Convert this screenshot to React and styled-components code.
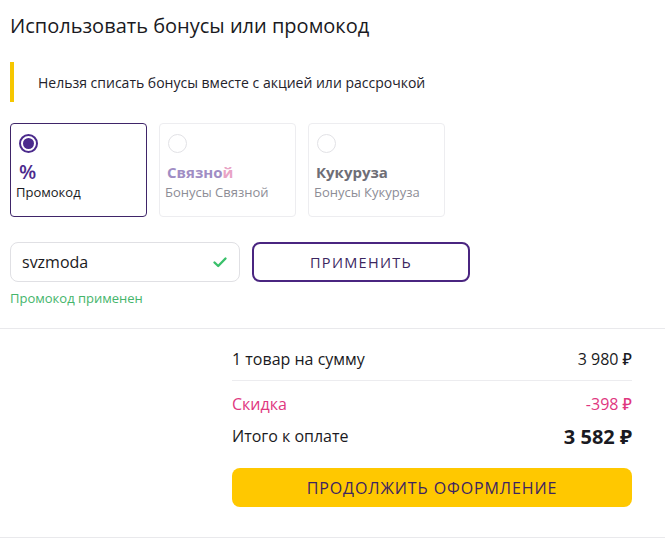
import React from 'react';
import styled, { createGlobalStyle } from 'styled-components';

const GlobalStyle = createGlobalStyle`
    * {
        box-sizing: border-box;
    }
    body {
        margin: 0;
        background: #fff;
        font-family: "Open Sans", "Noto Sans", sans-serif;
        color: #1e1d29;
    }
`

const Page = styled.div`
    width: 665px;
    height: 539px;
    overflow: hidden;
`

const Top = styled.section`
    padding: 12px 10px 0;
`

const Title = styled.h2`
    margin: 0;
    font-size: 20px;
    line-height: 28px;
    font-weight: 400;
    color: #1a1a22;
`

const Notice = styled.div`
    display: flex;
    align-items: center;
    height: 40px;
    margin-top: 22px;
    border-left: 4px solid #f6c700;
    padding-left: 24px;
    font-size: 14px;
    color: #23222b;
`

const Cards = styled.div`
    display: flex;
    gap: 12px;
    margin-top: 21px;
`

const Card = styled.div`
    width: 137px;
    height: 94px;
    padding: 10px 5px 0;
    border: 1px solid ${({ active }) => (active ? '#3f2569' : '#ededf0')};
    border-radius: 4px;
    display: flex;
    flex-direction: column;
`

const Radio = styled.span`
    width: 19px;
    height: 19px;
    margin-left: 3px;
    border-radius: 50%;
    border: ${({ checked }) => (checked ? '2px solid #4b2a8c' : '1px solid #e2e2e6')};
    display: flex;
    align-items: center;
    justify-content: center;

    &::after {
        content: '';
        width: 11px;
        height: 11px;
        border-radius: 50%;
        background: #4b2a8c;
        display: ${({ checked }) => (checked ? 'block' : 'none')};
    }
`

const CardTitle = styled.div`
    margin-top: 9px;
    height: 20px;
    line-height: 20px;
    font-size: 15px;
    font-weight: 700;
    color: ${({ color }) => color};
    padding-left: ${({ indent }) => indent || 0}px;
`

const Percent = styled.div`
    margin: 10px 0 0 3px;
    height: 18px;
    line-height: 18px;
    font-size: 20px;
    font-weight: 600;
    color: #4b2a8c;
`

const Pink = styled.span`
    color: #e9a4c6;
`

const CardSub = styled.div`
    margin-top: ${({ gap }) => gap || 2}px;
    font-size: 13px;
    line-height: 17px;
    color: ${({ dark }) => (dark ? '#1a1a22' : '#8d8d96')};
`

const PromoRow = styled.div`
    display: flex;
    gap: 12px;
    margin-top: 25px;
`

const InputBox = styled.div`
    width: 230px;
    height: 40px;
    border: 1px solid #e0e0e4;
    border-radius: 8px;
    display: flex;
    align-items: center;
    padding: 0 11px;
`

const CodeInput = styled.input`
    flex: 1;
    border: none;
    outline: none;
    font-family: inherit;
    font-size: 16px;
    color: #1a1a22;
    padding: 0;
    background: transparent;
    min-width: 0;
`

const ApplyBtn = styled.button`
    width: 218px;
    height: 40px;
    border: 2px solid #4a2580;
    border-radius: 8px;
    background: #fff;
    font-family: inherit;
    font-size: 14.5px;
    letter-spacing: 1.3px;
    color: #3b2660;
    font-weight: 500;
`

const Success = styled.div`
    margin-top: 8px;
    font-size: 13px;
    line-height: 17px;
    color: #45b56b;
`

const Divider = styled.div`
    height: 1px;
    background: #e9e9ec;
    margin-top: ${({ top }) => top}px;
`

const Summary = styled.section`
    width: 400px;
    margin-left: 232px;
    padding-top: 19px;
`

const Row = styled.div`
    display: flex;
    justify-content: space-between;
    align-items: center;
    height: ${({ h }) => h || 22}px;
    margin-top: ${({ top }) => top || 0}px;
    font-size: 16px;
    color: ${({ color }) => color || '#1a1a22'};
`

const Amount = styled.span`
    font-size: ${({ big }) => (big ? 20 : 16)}px;
    font-weight: ${({ big }) => (big ? 700 : 500)};
`

const Line = styled.div`
    height: 1px;
    background: #ececef;
    margin: ${({ m }) => m};
`

const CheckoutBtn = styled.button`
    display: block;
    width: 400px;
    height: 39px;
    margin-top: 19px;
    border: none;
    border-radius: 8px;
    background: #ffc800;
    font-family: inherit;
    font-size: 16px;
    letter-spacing: 0.9px;
    color: #3d2461;
    font-weight: 500;
`

const Check = () => (
    <svg width="16" height="16" viewBox="0 0 16 16">
        <path d="M2.5 8.5 L6.2 12 L13.5 4.5" fill="none" stroke="#39c06a" strokeWidth="2.4" strokeLinecap="round" strokeLinejoin="round" />
    </svg>
)

const App = () => {
    return <React.Fragment>
        <GlobalStyle />
        <Page>
            <Top>
                <Title>Использовать бонусы или промокод</Title>
                <Notice>Нельзя списать бонусы вместе с акцией или рассрочкой</Notice>

                <Cards>
                    <Card active>
                        <Radio checked />
                        <Percent>%</Percent>
                        <CardSub dark gap={3}>Промокод</CardSub>
                    </Card>
                    <Card>
                        <Radio />
                        <CardTitle color="#a08dc4" indent={2}>Связно<Pink>й</Pink></CardTitle>
                        <CardSub>Бонусы Связной</CardSub>
                    </Card>
                    <Card>
                        <Radio />
                        <CardTitle color="#6e6e76" indent={2}>Кукуруза</CardTitle>
                        <CardSub>Бонусы Кукуруза</CardSub>
                    </Card>
                </Cards>

                <PromoRow>
                    <InputBox>
                        <CodeInput defaultValue="svzmoda" />
                        <Check />
                    </InputBox>
                    <ApplyBtn>ПРИМЕНИТЬ</ApplyBtn>
                </PromoRow>
                <Success>Промокод применен</Success>
            </Top>

            <Divider top={21} />

            <Summary>
                <Row>
                    1 товар на сумму
                    <Amount>3 980 ₽</Amount>
                </Row>
                <Line m="10px 0 12px" />
                <Row color="#e0377f">
                    Скидка
                    <Amount>-398 ₽</Amount>
                </Row>
                <Row h={26} top={8}>
                    Итого к оплате
                    <Amount big>3 582 ₽</Amount>
                </Row>
                <CheckoutBtn>ПРОДОЛЖИТЬ ОФОРМЛЕНИЕ</CheckoutBtn>
            </Summary>

            <Divider top={30} />
        </Page>
    </React.Fragment>
}

export default App;
